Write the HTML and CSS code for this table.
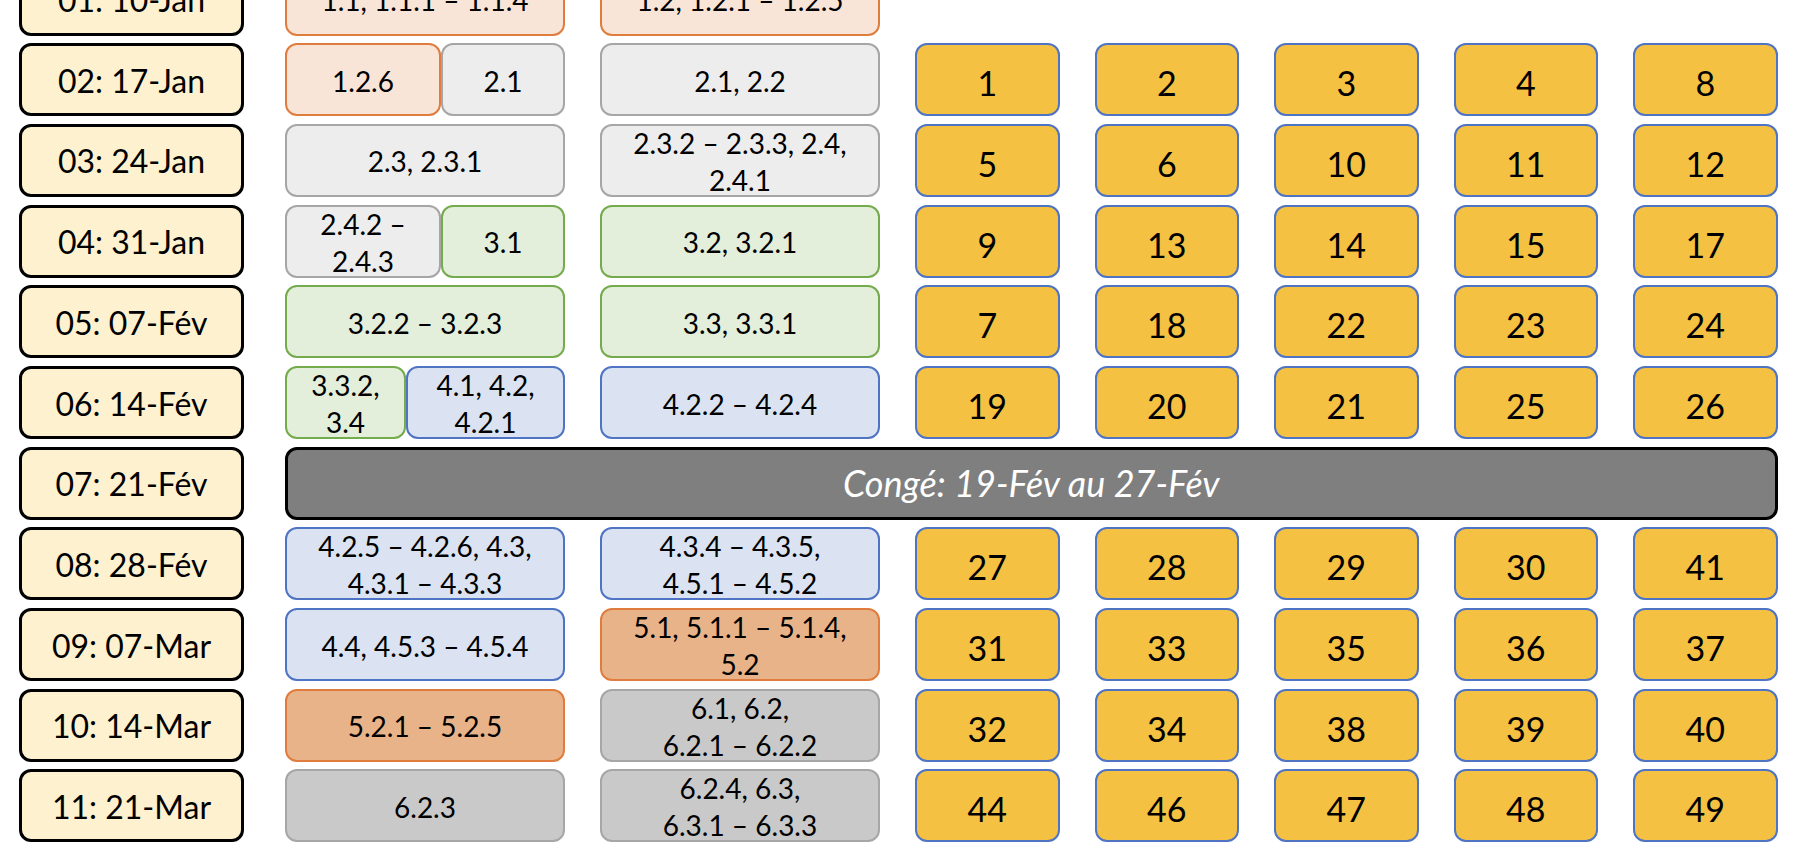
FILE: index.html
```html
<!DOCTYPE html>
<html lang="fr">
<head>
<meta charset="utf-8">
<title>Planning</title>
<link rel="stylesheet" href="styles.css">
</head>
<body>
<div class="sheet">
  <div class="week">01: 10-Jan</div>
  <div class="box o1">1.1, 1.1.1 – 1.1.4</div>
  <div class="box o1">1.2, 1.2.1 – 1.2.5</div>

  <div class="week">02: 17-Jan</div>
  <div class="split"><div class="box o1 w156">1.2.6</div><div class="box g1 grow">2.1</div></div>
  <div class="box g1">2.1, 2.2</div>
  <div class="num">1</div><div class="num">2</div><div class="num">3</div><div class="num">4</div><div class="num">8</div>

  <div class="week">03: 24-Jan</div>
  <div class="box g1">2.3, 2.3.1</div>
  <div class="box g1">2.3.2 – 2.3.3, 2.4,<br>2.4.1</div>
  <div class="num">5</div><div class="num">6</div><div class="num">10</div><div class="num">11</div><div class="num">12</div>

  <div class="week">04: 31-Jan</div>
  <div class="split"><div class="box g1 w156">2.4.2 –<br>2.4.3</div><div class="box gr grow">3.1</div></div>
  <div class="box gr">3.2, 3.2.1</div>
  <div class="num">9</div><div class="num">13</div><div class="num">14</div><div class="num">15</div><div class="num">17</div>

  <div class="week">05: 07-Fév</div>
  <div class="box gr">3.2.2 – 3.2.3</div>
  <div class="box gr">3.3, 3.3.1</div>
  <div class="num">7</div><div class="num">18</div><div class="num">22</div><div class="num">23</div><div class="num">24</div>

  <div class="week">06: 14-Fév</div>
  <div class="split"><div class="box gr w121">3.3.2,<br>3.4</div><div class="box bl grow">4.1, 4.2,<br>4.2.1</div></div>
  <div class="box bl">4.2.2 – 4.2.4</div>
  <div class="num">19</div><div class="num">20</div><div class="num">21</div><div class="num">25</div><div class="num">26</div>

  <div class="week">07: 21-Fév</div>
  <div class="conge">Congé: 19-Fév au 27-Fév</div>

  <div class="week">08: 28-Fév</div>
  <div class="box bl">4.2.5 – 4.2.6, 4.3,<br>4.3.1 – 4.3.3</div>
  <div class="box bl">4.3.4 – 4.3.5,<br>4.5.1 – 4.5.2</div>
  <div class="num">27</div><div class="num">28</div><div class="num">29</div><div class="num">30</div><div class="num">41</div>

  <div class="week">09: 07-Mar</div>
  <div class="box bl">4.4, 4.5.3 – 4.5.4</div>
  <div class="box o2">5.1, 5.1.1 – 5.1.4,<br>5.2</div>
  <div class="num">31</div><div class="num">33</div><div class="num">35</div><div class="num">36</div><div class="num">37</div>

  <div class="week">10: 14-Mar</div>
  <div class="box o2">5.2.1 – 5.2.5</div>
  <div class="box g2">6.1, 6.2,<br>6.2.1 – 6.2.2</div>
  <div class="num">32</div><div class="num">34</div><div class="num">38</div><div class="num">39</div><div class="num">40</div>

  <div class="week">11: 21-Mar</div>
  <div class="box g2">6.2.3</div>
  <div class="box g2">6.2.4, 6.3,<br>6.3.1 – 6.3.3</div>
  <div class="num">44</div><div class="num">46</div><div class="num">47</div><div class="num">48</div><div class="num">49</div>
</div>
</body>
</html>
```

FILE: styles.css
```css
html, body {
  margin: 0;
  padding: 0;
  background: #ffffff;
  overflow: hidden;
}

body {
  font-family: "Lato", "Liberation Sans", sans-serif;
  color: #000;
}

.sheet {
  display: grid;
  grid-template-columns: 231px 280px 280px repeat(5, 144.5px);
  grid-auto-rows: 73px;
  column-gap: 35px;
  row-gap: 7.7px;
  margin-top: -37.4px;
  padding-left: 19px;
}

.week {
  grid-column: 1;
  width: 225px;
  box-sizing: border-box;
  border: 3px solid #000;
  border-radius: 12px;
  background: #fdf1cf;
  display: flex;
  align-items: center;
  justify-content: center;
  font-size: 32px;
  padding-top: 1px;
}

.box {
  box-sizing: border-box;
  border: 2.5px solid;
  border-radius: 12px;
  display: flex;
  align-items: center;
  justify-content: center;
  text-align: center;
  font-size: 28px;
  line-height: 37px;
  padding-top: 3px;
}

.split {
  display: flex;
}

.w156 { width: 156px; flex: none; }
.w121 { width: 121px; flex: none; }
.grow { flex: 1; }

.o1 { background: #f8e5d8; border-color: #e07d3e; }
.o2 { background: #e9b38a; border-color: #e07d3e; }
.g1 { background: #ededed; border-color: #a6a6a6; }
.g2 { background: #c9c9c9; border-color: #a6a6a6; }
.gr { background: #e3eedb; border-color: #74ab4c; }
.bl { background: #dbe3f2; border-color: #4f74c3; }

.num {
  box-sizing: border-box;
  border: 2.5px solid #4f74c3;
  border-radius: 12px;
  background: #f4c142;
  display: flex;
  align-items: center;
  justify-content: center;
  font-size: 34px;
  padding-top: 6px;
}

.conge {
  grid-column: 2 / -1;
  box-sizing: border-box;
  border: 3px solid #000;
  border-radius: 12px;
  background: #7f7f7f;
  color: #ffffff;
  font-style: italic;
  font-size: 36px;
  display: flex;
  align-items: center;
  justify-content: center;
}
```
